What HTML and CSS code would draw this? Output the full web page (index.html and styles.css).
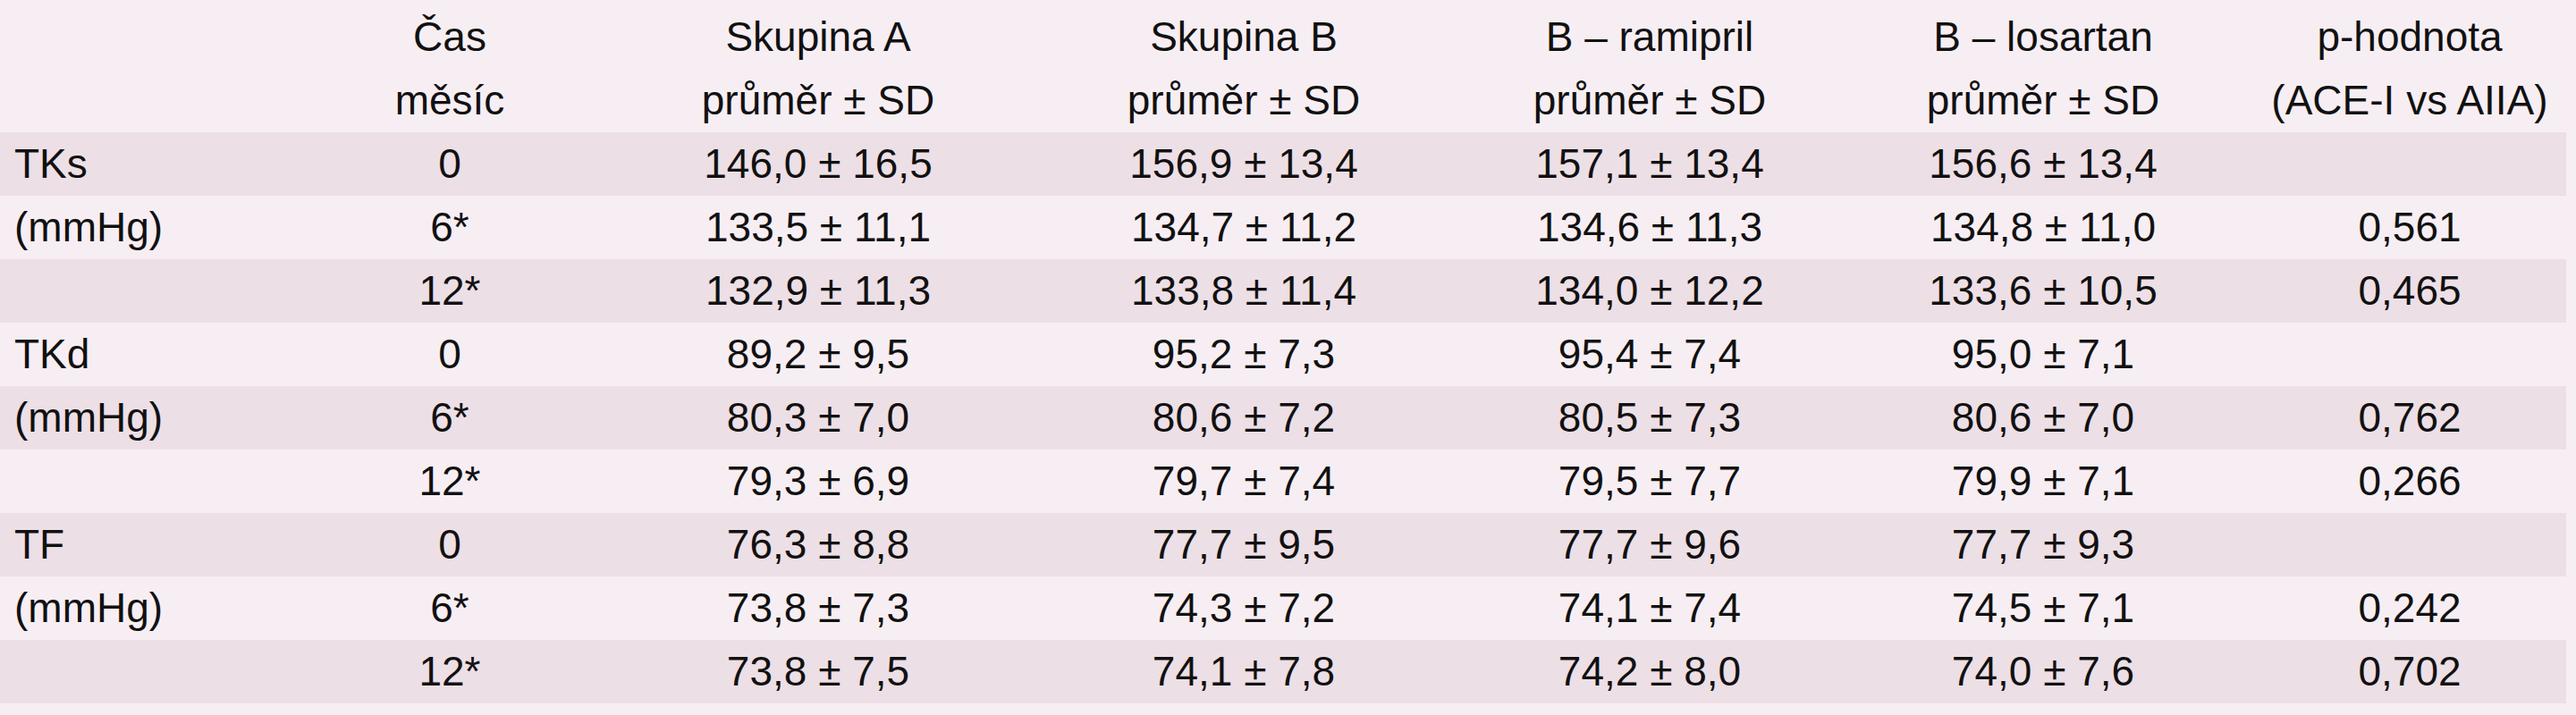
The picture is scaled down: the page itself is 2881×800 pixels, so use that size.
FILE: index.html
```html
<!DOCTYPE html>
<html lang="cs">
<head>
<meta charset="utf-8">
<title>Tabulka</title>
<link rel="stylesheet" href="styles.css">
</head>
<body>
<table class="data">
  <colgroup>
    <col class="c-label">
    <col class="c-time">
    <col class="c-a">
    <col class="c-b">
    <col class="c-ram">
    <col class="c-los">
    <col class="c-p">
  </colgroup>
  <thead>
    <tr class="head">
      <th></th>
      <th>Čas<br>měsíc</th>
      <th>Skupina A<br>průměr ± SD</th>
      <th>Skupina B<br>průměr ± SD</th>
      <th>B – ramipril<br>průměr ± SD</th>
      <th>B – losartan<br>průměr ± SD</th>
      <th>p-hodnota<br>(ACE-I vs AIIA)</th>
    </tr>
  </thead>
  <tbody>
    <tr><td class="label">TKs</td><td>0</td><td>146,0 ± 16,5</td><td>156,9 ± 13,4</td><td>157,1 ± 13,4</td><td>156,6 ± 13,4</td><td></td></tr>
    <tr><td class="label">(mmHg)</td><td>6*</td><td>133,5 ± 11,1</td><td>134,7 ± 11,2</td><td>134,6 ± 11,3</td><td>134,8 ± 11,0</td><td>0,561</td></tr>
    <tr><td class="label"></td><td>12*</td><td>132,9 ± 11,3</td><td>133,8 ± 11,4</td><td>134,0 ± 12,2</td><td>133,6 ± 10,5</td><td>0,465</td></tr>
    <tr><td class="label">TKd</td><td>0</td><td>89,2 ± 9,5</td><td>95,2 ± 7,3</td><td>95,4 ± 7,4</td><td>95,0 ± 7,1</td><td></td></tr>
    <tr><td class="label">(mmHg)</td><td>6*</td><td>80,3 ± 7,0</td><td>80,6 ± 7,2</td><td>80,5 ± 7,3</td><td>80,6 ± 7,0</td><td>0,762</td></tr>
    <tr><td class="label"></td><td>12*</td><td>79,3 ± 6,9</td><td>79,7 ± 7,4</td><td>79,5 ± 7,7</td><td>79,9 ± 7,1</td><td>0,266</td></tr>
    <tr><td class="label">TF</td><td>0</td><td>76,3 ± 8,8</td><td>77,7 ± 9,5</td><td>77,7 ± 9,6</td><td>77,7 ± 9,3</td><td></td></tr>
    <tr><td class="label">(mmHg)</td><td>6*</td><td>73,8 ± 7,3</td><td>74,3 ± 7,2</td><td>74,1 ± 7,4</td><td>74,5 ± 7,1</td><td>0,242</td></tr>
    <tr><td class="label"></td><td>12*</td><td>73,8 ± 7,5</td><td>74,1 ± 7,8</td><td>74,2 ± 8,0</td><td>74,0 ± 7,6</td><td>0,702</td></tr>
  </tbody>
</table>
</body>
</html>
```

FILE: styles.css
```css
html, body {
  margin: 0;
  padding: 0;
  background: #f7eef3;
}

body {
  font-family: "Liberation Sans", Arial, sans-serif;
  font-size: 46px;
  color: #111;
}

.data {
  width: 2870px;
  table-layout: fixed;
  border-collapse: collapse;
  border-spacing: 0;
}

.c-label { width: 318px; }
.c-time  { width: 370px; }
.c-a     { width: 454px; }
.c-b     { width: 498px; }
.c-ram   { width: 410px; }
.c-los   { width: 470px; }
.c-p     { width: 350px; }

.head th {
  font-weight: normal;
  text-align: center;
  vertical-align: top;
  line-height: 71px;
  padding: 6px 0 0;
  height: 147px;
  box-sizing: border-box;
  white-space: nowrap;
}

tbody td {
  height: 71px;
  padding: 0;
  text-align: center;
  vertical-align: middle;
  line-height: 71px;
  white-space: nowrap;
}

tbody tr:nth-child(odd) {
  background: #eddfe6;
}

tbody tr:nth-child(even) {
  background: #f7eef3;
}

tbody td.label {
  text-align: left;
  padding-left: 16px;
}
```
